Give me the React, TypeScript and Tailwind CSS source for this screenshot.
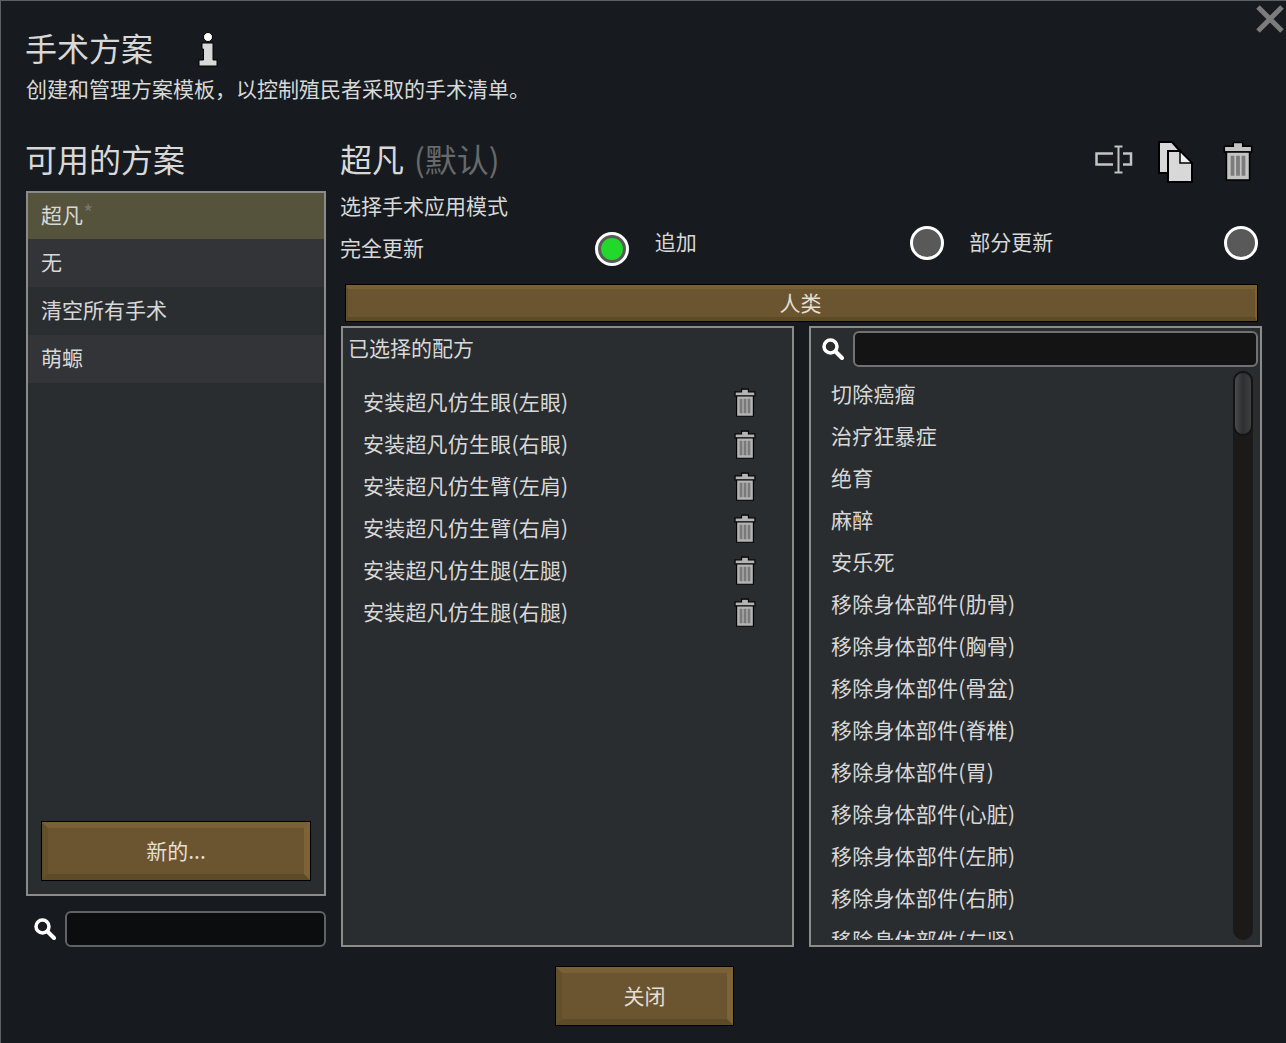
import React from 'react';

const FONT = '"Noto Sans CJK SC", "Noto Sans", sans-serif';

const presets = ['超凡', '无', '清空所有手术', '萌螈'];
const selected = ['安装超凡仿生眼(左眼)', '安装超凡仿生眼(右眼)', '安装超凡仿生臂(左肩)', '安装超凡仿生臂(右肩)', '安装超凡仿生腿(左腿)', '安装超凡仿生腿(右腿)'];
const available = ['切除癌瘤', '治疗狂暴症', '绝育', '麻醉', '安乐死', '移除身体部件(肋骨)', '移除身体部件(胸骨)', '移除身体部件(骨盆)', '移除身体部件(脊椎)', '移除身体部件(胃)', '移除身体部件(心脏)', '移除身体部件(左肺)', '移除身体部件(右肺)', '移除身体部件(左肾)'];

const Trash: React.FC<{ className?: string; fill?: string; bar?: string }> = ({ className, fill = '#b4b4b4', bar = '#7a7a7a' }) => (
  <svg viewBox="0 0 28 38" className={className}>
    <path d="M9.500 5V1.500h9V5h8.500v5.500H1V5z" fill={fill} stroke="#000" strokeWidth="1.500" />
    <path d="M3 10.500h22V37H3z" fill={fill} stroke="#000" strokeWidth="1.500" />
    <path d="M7 14h3.600v19H7zM12.200 14h3.600v19h-3.600zM17.400 14h3.600v19h-3.600z" fill={bar} />
  </svg>
);

const SearchIcon: React.FC<{ className?: string }> = ({ className }) => (
  <svg viewBox="0 0 22 22" className={className}>
    <circle cx="8.500" cy="8.500" r="6.500" fill="none" stroke="#fff" strokeWidth="3.500" />
    <path d="M13.500 13.500L20 20" stroke="#fff" strokeWidth="4" strokeLinecap="round" />
  </svg>
);

const Radio: React.FC<{ on?: boolean }> = ({ on }) => (
  <div className="w-[34px] h-[34px] rounded-full border-[3px] border-white bg-[#595959] flex items-center justify-center shrink-0">
    {on && <div className="w-[22px] h-[22px] rounded-full bg-[#22d82a]" />}
  </div>
);

const WoodButton: React.FC<{ label: string; className?: string }> = ({ label, className }) => (
  <div className={`border border-black ${className}`}>
    <div className="h-full border-[6px] border-t-[#7a6135] border-l-[#62502c] border-r-[#7d6335] border-b-[#5d4a27] bg-[#6b5430] flex items-center justify-center text-[21px] text-[#e4dfd2]">
      {label}
    </div>
  </div>
);

export default function App() {
  return (
    <div
      className="relative w-[1286px] h-[1043px] overflow-hidden bg-[#171b1f] border-t border-l border-[#5c6064] pl-[25px] pr-[24px] pt-[26px] text-[#d8d8d8] flex flex-col"
      style={{ fontFamily: FONT }}
    >
      <svg viewBox="0 0 28 28" className="absolute right-[2px] top-[4px] w-[28px] h-[28px]">
        <path d="M2 2l24 24M26 2L2 26" stroke="#7c7c7c" strokeWidth="5" />
      </svg>

      <div className="h-[40px] -ml-[1px] flex items-center gap-[45px]">
        <span className="text-[32px] leading-[40px]">手术方案</span>
        <svg viewBox="0 0 20 36" className="w-[20px] h-[36px] mt-[6px]">
          <circle cx="10" cy="5" r="4.500" fill="#fff" stroke="#000" strokeWidth="1" />
          <path d="M4 11h11v17h4v6H1v-6h4.500v-11H4z" fill="#d8d8d8" stroke="#000" strokeWidth="1" />
        </svg>
      </div>
      <div className="h-[28px] mt-[7px] text-[21px] leading-[28px]">创建和管理方案模板，以控制殖民者采取的手术清单。</div>

      <div className="flex mt-[39px] gap-[15px]">
        <div className="w-[300px] shrink-0 flex flex-col">
          <div className="h-[50px] -ml-[1px] text-[32px] leading-[34px]">可用的方案</div>
          <div className="h-[705px] border-2 border-[#8b8c8a] bg-[#2a2d2f] flex flex-col">
            <div className="h-[46px] pb-[2px] bg-[#55533c] pl-[13px] flex items-center text-[21px]">
              {presets[0]}
              <span className="text-[#77776a] text-[22px] -mt-[8px]">*</span>
            </div>
            <div className="h-[48px] bg-[#323437] pl-[13px] pb-[2px] flex items-center text-[21px]">{presets[1]}</div>
            <div className="h-[48px] bg-[#2b2e31] pl-[13px] pb-[2px] flex items-center text-[21px]">{presets[2]}</div>
            <div className="h-[48px] bg-[#323437] pl-[13px] pb-[2px] flex items-center text-[21px]">{presets[3]}</div>
            <WoodButton label="新的..." className="mt-auto mx-[13px] mb-[13px] h-[60px]" />
          </div>
          <div className="h-[36px] mt-[15px] flex items-center gap-[9px] pl-[8px]">
            <SearchIcon className="w-[22px] h-[22px] shrink-0" />
            <div className="flex-1 h-full bg-[#0b0d0f] border-2 border-[#5f6366] rounded-[6px]" />
          </div>
        </div>

        <div className="flex-1 flex flex-col">
          <div className="h-[50px] flex justify-between">
            <div className="text-[32px] leading-[34px] -ml-[1px] flex gap-[10px]">
              <span>超凡</span>
              <span className="text-[#68696a]">(默认)</span>
            </div>
            <div className="flex items-start gap-[27px] pr-[9px]">
              <svg viewBox="0 0 38 30" className="w-[38px] h-[30px] mt-[4px]">
                <path d="M18 8.500H1.500v11H18M28 8.500h8v11h-8" fill="none" stroke="#c4c4c4" strokeWidth="2.500" />
                <path d="M19.500 1.500h8M23.500 1.500v26M19.500 27.500h8" fill="none" stroke="#c4c4c4" strokeWidth="2" />
              </svg>
              <svg viewBox="0 0 36 42" className="w-[36px] h-[42px] -ml-[2px] mr-[2px]">
                <path d="M1 1h13l8 9v22H1z" fill="#d8d8d8" stroke="#000" strokeWidth="2" />
                <path d="M10 10h12l12 12v19H10z" fill="#d8d8d8" stroke="#000" strokeWidth="2" />
                <path d="M22 10l12 12H22z" fill="#f0f0f0" stroke="#000" strokeWidth="1.500" />
              </svg>
              <Trash className="w-[30px] h-[40px]" fill="#c4c4c4" bar="#7c7c7c" />
            </div>
          </div>
          <div className="h-[28px] -ml-[1px] text-[21px] leading-[28px]">选择手术应用模式</div>
          <div className="h-[42px] mt-[7px] flex gap-[25px] pr-[4px]">
            <div className="flex-1 flex justify-between items-center pt-[4px] -ml-[1px] mr-[2px]">
              <span className="text-[21px] mt-[-2px]">完全更新</span>
              <Radio on />
            </div>
            <div className="flex-1 flex justify-between items-start">
              <span className="text-[21px] leading-[28px] mt-[1px] -ml-[1px]">追加</span>
              <Radio />
            </div>
            <div className="flex-1 flex justify-between items-start">
              <span className="text-[21px] leading-[28px] mt-[1px]">部分更新</span>
              <Radio />
            </div>
          </div>
          <div className="h-[38px] mt-[16px] ml-[4px] mr-[4px] border border-black">
            <div className="h-full border-y-[4px] border-x-[2px] border-t-[#7a6135] border-b-[#5d4a27] border-l-[#62502c] border-r-[#7d6335] bg-[#6b5430] flex items-center justify-center text-[21px] text-[#e4dfd2]">
              <span className="-ml-[2px] -mt-[1px]">人类</span>
            </div>
          </div>

          <div className="h-[621px] mt-[4px] flex gap-[15px]">
            <div className="w-[453px] border-2 border-[#8b8c8a] bg-[#2a2d2f] flex flex-col">
              <div className="h-[40px] pl-[5px] flex items-center text-[21px]">已选择的配方</div>
              <div className="mt-[13px] flex flex-col">
                {selected.map((s) => (
                  <div key={s} className="h-[42px] pl-[20px] pr-[36px] flex items-center justify-between text-[21px] tracking-[0.2px]">
                    <span>{s}</span>
                    <Trash className="w-[22px] h-[29px]" />
                  </div>
                ))}
              </div>
            </div>

            <div className="w-[453px] border-2 border-[#8b8c8a] bg-[#2a2d2f] flex flex-col">
              <div className="h-[36px] mt-[3px] flex items-center gap-[9px] pl-[11px] pr-[2px] shrink-0">
                <SearchIcon className="w-[22px] h-[22px] shrink-0" />
                <div className="flex-1 h-full bg-[#141414] border-2 border-[#6f7173] rounded-[6px]" />
              </div>
              <div className="flex mt-[4px] h-[569px] pr-[7px]">
                <div className="flex-1 overflow-hidden pl-[20px] pt-[2px]">
                  {available.map((a) => (
                    <div key={a} className="h-[42px] flex items-center text-[21px] tracking-[0.2px]">{a}</div>
                  ))}
                </div>
                <div className="w-[20px] h-full rounded-[10px] bg-[#1b1a19]">
                  <div className="h-[65px] rounded-[10px] border-2 border-[#141414] bg-gradient-to-r from-[#4a4b4c] via-[#2e2f30] to-[#3e3f40]" />
                </div>
              </div>
            </div>
          </div>
        </div>
      </div>

      <WoodButton label="关闭" className="w-[179px] h-[60px] mt-[19px] ml-[529px]" />
    </div>
  );
}
